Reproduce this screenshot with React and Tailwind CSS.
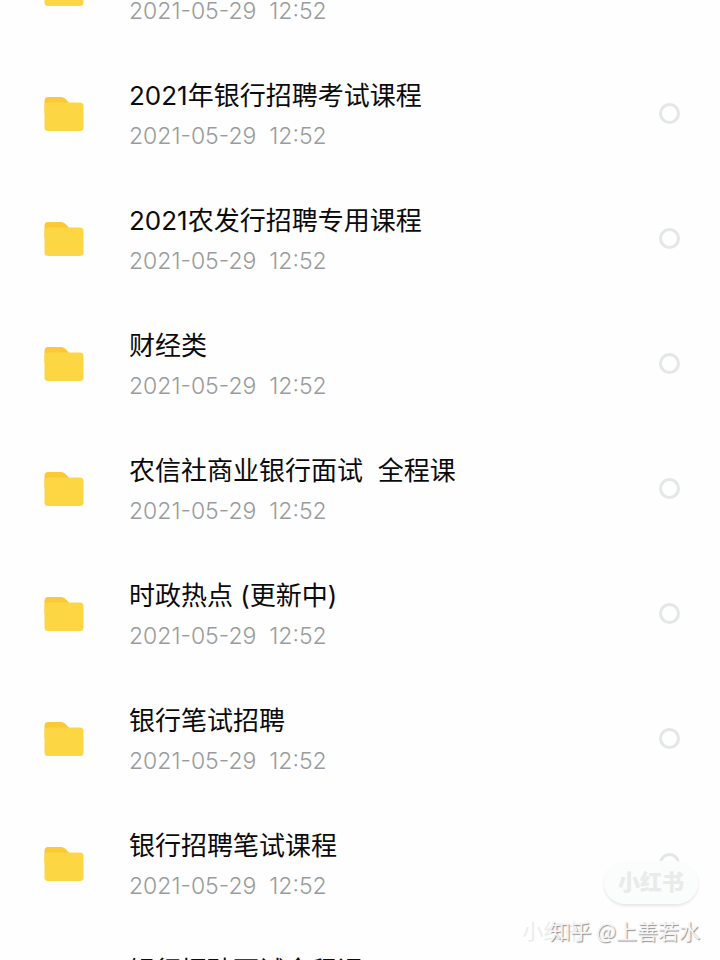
const files = [
  { id: 1, title: '', date: '2021-05-29  12:52' },
  { id: 2, title: '2021年银行招聘考试课程', date: '2021-05-29  12:52' },
  { id: 3, title: '2021农发行招聘专用课程', date: '2021-05-29  12:52' },
  { id: 4, title: '财经类', date: '2021-05-29  12:52' },
  { id: 5, title: '农信社商业银行面试  全程课', date: '2021-05-29  12:52' },
  { id: 6, title: '时政热点 (更新中)', date: '2021-05-29  12:52' },
  { id: 7, title: '银行笔试招聘', date: '2021-05-29  12:52' },
  { id: 8, title: '银行招聘笔试课程', date: '2021-05-29  12:52' },
  { id: 9, title: '银行招聘面试全程课', date: '' },
]

export default function App() {
  return (
    <main className="relative h-screen overflow-hidden bg-[#fefefe] font-['Inter','Noto_Sans_CJK_SC',sans-serif]">
      {/* The list is scrolled, so the first row is cut at the top */}
      <ul className="-mt-[74px]">
        {files.map((file) => (
          <FileRow key={file.id} file={file} />
        ))}
      </ul>
      <Watermark />
    </main>
  )
}

function FileRow({ file }) {
  const inputId = `file-${file.id}`

  return (
    <li>
      <label htmlFor={inputId} className="flex items-center h-[125px] pl-11 pr-10">
        <FolderIcon />
        <div className="flex-1 min-w-0 ml-[45px] pt-0.5 whitespace-pre">
          <p className="h-10 mb-0.5 text-[26px] leading-10 text-[#0b0b0d]">{file.title}</p>
          <p className="h-9 text-[23px] leading-9 font-light text-[#989c9d]">{file.date}</p>
        </div>
        <input
          id={inputId}
          type="checkbox"
          aria-label={file.title || file.date}
          className="appearance-none w-[21px] h-[21px] shrink-0 rounded-full border-3 border-[#e3e7e6] checked:bg-[#fdd848]"
        />
      </label>
    </li>
  )
}

function FolderIcon() {
  return (
    <svg viewBox="0 0 40 34" className="w-10 h-[34px] shrink-0" aria-hidden="true">
      <path d="M4 0H17Q19.500 0 21 1.500L25 5.500V16H0.500V4Q0.500 0 4 0Z" fill="#fbc935" />
      <path d="M4.500 5.500H36Q39.500 5.500 39.500 9V30.500Q39.500 34 36 34H4Q0.500 34 0.500 30.500V9Q0.500 5.500 4.500 5.500Z" fill="#fdd643" />
    </svg>
  )
}

function Watermark() {
  return (
    <div className="absolute right-0 bottom-0 flex flex-col items-end pb-3">
      <span className="mr-[22px] px-3.5 rounded-full bg-[#fbfcfc]/95 text-[22px] leading-[43px] font-black text-[#e9ebeb] shadow-[0_2px_3px_#e4e7e6]">
        小红书
      </span>
      <div className="relative mr-5 mt-2 text-[21px] leading-9 font-['Noto_Sans_CJK_SC',sans-serif]">
        <span className="absolute right-full -mr-9 whitespace-nowrap text-[#ececec]">小红书</span>
        <span className="relative text-[#f4f4f4] [text-shadow:1px_1px_1px_#909090]">知乎 @上善若水</span>
      </div>
    </div>
  )
}
